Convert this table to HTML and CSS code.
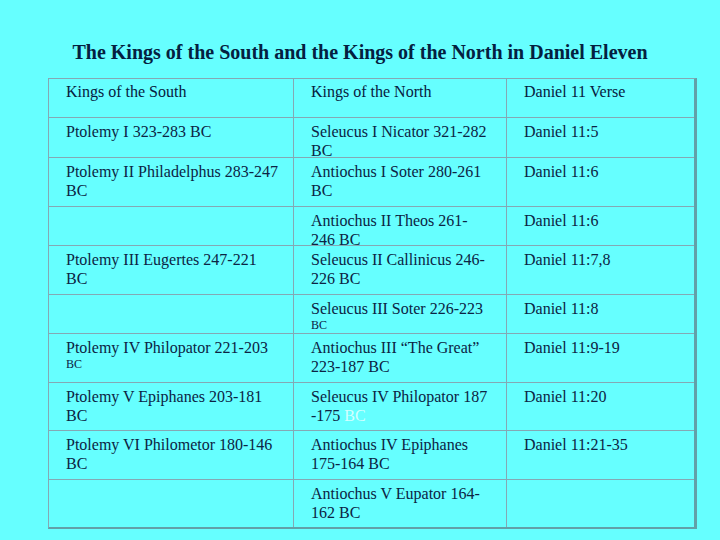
FILE: index.html
```html
<!DOCTYPE html>
<html>
<head>
<meta charset="utf-8">
<link rel="stylesheet" href="styles.css">
</head>
<body>
<h1 class="title">The Kings of the South and the Kings of the North in Daniel Eleven</h1>
<div class="grid">
  <div class="cell head">Kings of the South</div>
  <div class="cell head">Kings of the North</div>
  <div class="cell head last">Daniel 11 Verse</div>

  <div class="cell">Ptolemy I 323-283 BC</div>
  <div class="cell">Seleucus I Nicator 321-282<br>BC</div>
  <div class="cell last">Daniel 11:5</div>

  <div class="cell">Ptolemy II Philadelphus 283-247<br>BC</div>
  <div class="cell">Antiochus I Soter 280-261<br>BC</div>
  <div class="cell last">Daniel 11:6</div>

  <div class="cell"></div>
  <div class="cell">Antiochus II Theos 261-<br>246 BC</div>
  <div class="cell last">Daniel 11:6</div>

  <div class="cell">Ptolemy III Eugertes 247-221<br>BC</div>
  <div class="cell">Seleucus II Callinicus 246-<br>226 BC</div>
  <div class="cell last">Daniel 11:7,8</div>

  <div class="cell"></div>
  <div class="cell">Seleucus III Soter 226-223<span class="small">BC</span></div>
  <div class="cell last">Daniel 11:8</div>

  <div class="cell">Ptolemy IV Philopator 221-203<span class="small">BC</span></div>
  <div class="cell">Antiochus III “The Great”<br>223-187 BC</div>
  <div class="cell last">Daniel 11:9-19</div>

  <div class="cell">Ptolemy V Epiphanes 203-181<br>BC</div>
  <div class="cell">Seleucus IV Philopator 187<br>-175 <span class="faint">BC</span></div>
  <div class="cell last">Daniel 11:20</div>

  <div class="cell">Ptolemy VI Philometor 180-146<br>BC</div>
  <div class="cell">Antiochus IV Epiphanes<br>175-164 BC</div>
  <div class="cell last">Daniel 11:21-35</div>

  <div class="cell bottom"></div>
  <div class="cell bottom">Antiochus V Eupator 164-<br>162 BC</div>
  <div class="cell bottom last"></div>
</div>
</body>
</html>
```
FILE: styles.css
```css
html, body {
  margin: 0;
  padding: 0;
  background: #66ffff;
}
body {
  width: 720px;
  height: 540px;
  overflow: hidden;
  font-family: "Liberation Serif", "Times New Roman", serif;
  color: #0c2444;
}
.title {
  margin: 0;
  padding-top: 41px;
  height: 37px;
  font-size: 20px;
  line-height: 23px;
  font-weight: bold;
  text-align: center;
  color: #042040;
  box-sizing: content-box;
}
.grid {
  margin-left: 48px;
  width: 649px;
  box-sizing: border-box;
  display: grid;
  grid-template-columns: 245px 213px 187px;
  grid-template-rows: 39px 40px 49px 39px 49px 39px 49px 48px 49px 47px;
  border-top: 1px solid #84a8b4;
  border-left: 1px solid #84a8b4;
  border-right: 3px solid #62a0a8;
  border-bottom: 2px solid #62a0a8;
}
.cell {
  box-sizing: border-box;
  border-right: 1px solid #84a8b4;
  border-bottom: 1px solid #84a8b4;
  padding: 4px 4px 0 17px;
  font-size: 16px;
  line-height: 19px;
  white-space: nowrap;
  overflow: visible;
}
.cell.last {
  border-right: none;
}
.cell.bottom {
  border-bottom: none;
}
.cell.head {
  padding-top: 3px;
  color: #06203e;
}
.small {
  display: block;
  font-size: 12px;
  line-height: 14px;
}
.faint {
  color: #d4ffff;
}
```
